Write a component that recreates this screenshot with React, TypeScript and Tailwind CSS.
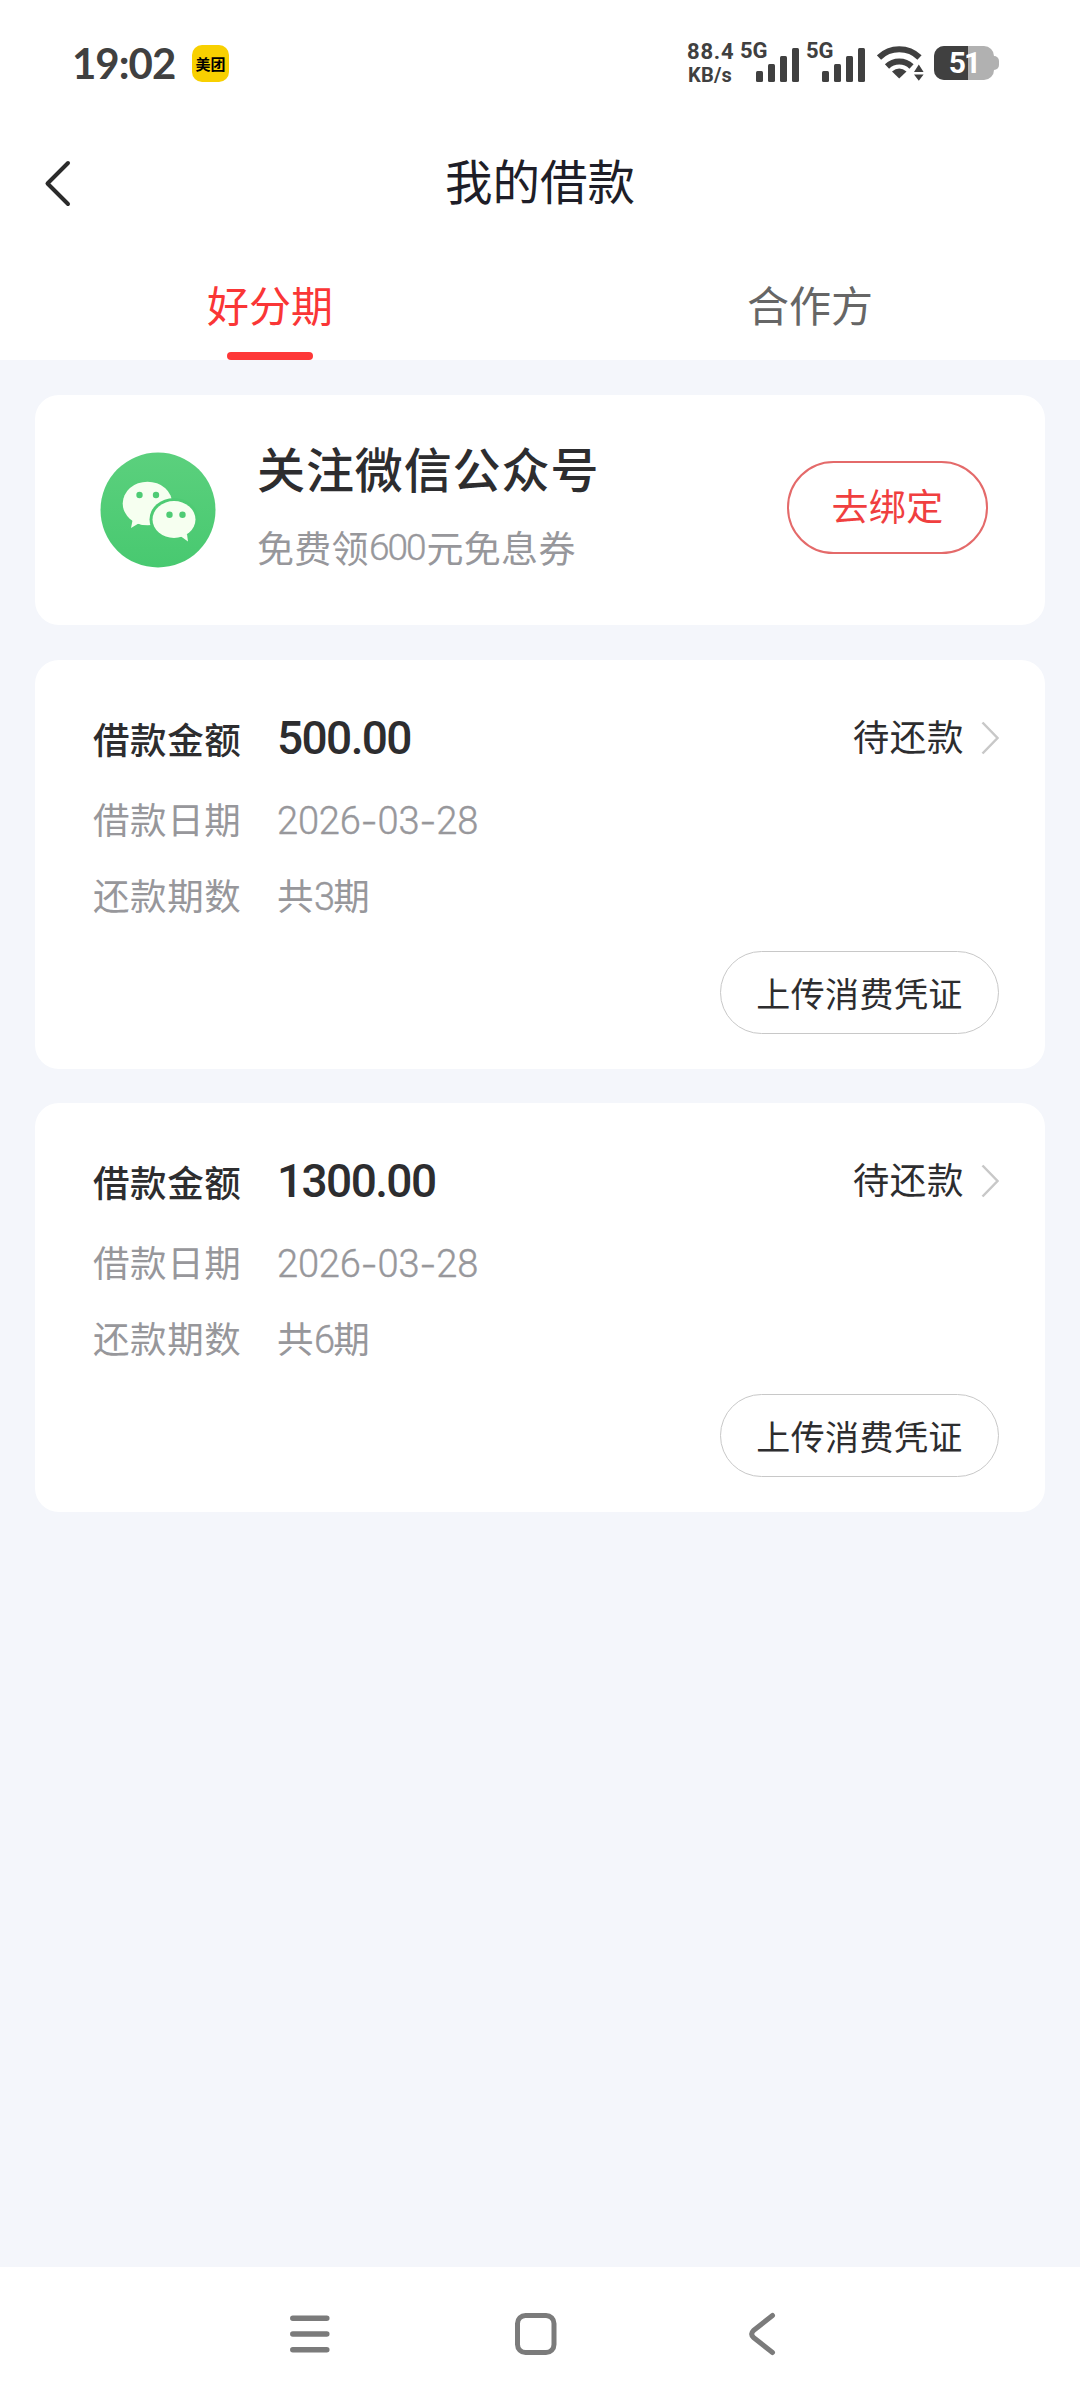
import React from 'react';

interface Loan {
  id: number;
  amount: string;
  date: string;
  periods: number;
  status: string;
}

const loans: Loan[] = [
  { id: 1, amount: '500.00', date: '2026-03-28', periods: 3, status: '待还款' },
  { id: 2, amount: '1300.00', date: '2026-03-28', periods: 6, status: '待还款' },
];

function SignalBars() {
  return (
    <svg width="43" height="34" viewBox="0 0 43 34" fill="#404040">
      <rect x="0" y="23" width="7" height="11" rx="1.5" />
      <rect x="12" y="16" width="7" height="18" rx="1.5" />
      <rect x="24" y="8" width="7" height="26" rx="1.5" />
      <rect x="36" y="0" width="7" height="34" rx="1.5" />
    </svg>
  );
}

function Signal() {
  return (
    <div className="flex h-[38px] w-[66px] shrink-0 items-end">
      <span className="-ml-px w-[16px] self-start text-[22px] font-bold leading-[14px]">5G</span>
      <SignalBars />
    </div>
  );
}

function WifiIcon() {
  return (
    <svg width="47" height="36" viewBox="0 0 47 36" className="shrink-0">
      <g fill="none" stroke="#404040" strokeWidth="6">
        <path d="M2 12.5 A29 29 0 0 1 42.500 12.500" />
        <path d="M10 21.500 A17.500 17.500 0 0 1 34.500 21.500" />
      </g>
      <path d="M15 26.500 Q22.200 20.500 29.500 26.500 L22.200 33.500 Z" fill="#404040" />
      <path d="M37 27 L41.800 19.500 L46.600 27 Z M37 29.500 L46.600 29.500 L41.800 35.800 Z" fill="#404040" />
    </svg>
  );
}

function Battery() {
  return (
    <div className="flex shrink-0 items-center">
      <div className="relative flex h-[34px] w-[60px] items-center overflow-hidden rounded-[10px] bg-[#b1b1b1]">
        <div className="h-full w-[34px] bg-[#404040]" />
        <span className="absolute inset-0 flex items-center justify-center text-[30px] font-bold leading-none tracking-[-2px] text-white">
          51
        </span>
      </div>
      <div className="h-[14px] w-[5px] rounded-r-[5px] bg-[#b1b1b1]" />
    </div>
  );
}

function StatusBar() {
  return (
    <div className="flex h-[126px] items-center pl-[72px] pr-[81px] font-['Lato','Noto_Sans_CJK_SC',sans-serif] text-[#404040]">
      <span className="w-[120px] text-[42px] font-bold leading-none tracking-[-1px]">19:02</span>
      <div className="flex h-[37px] w-[37px] items-center justify-center rounded-[10px] bg-[#f8d000]">
        <span className="font-['Noto_Sans_CJK_SC',sans-serif] text-[15px] font-bold leading-[19px] text-black">美团</span>
      </div>
      <div className="ml-auto flex items-center">
        <div className="flex w-[54px] flex-col gap-[9px] font-['Roboto',sans-serif] font-bold">
          <span className="text-[22px] leading-[14px] tracking-[0.8px]">88.4</span>
          <span className="pl-px text-[20px] leading-[14px] tracking-[0.2px]">KB/s</span>
        </div>
        <div className="flex font-['Roboto',sans-serif]">
          <Signal />
          <Signal />
        </div>
        <div className="ml-[4px] flex items-center gap-[10px] font-['Roboto',sans-serif]">
          <WifiIcon />
          <Battery />
        </div>
      </div>
    </div>
  );
}

function NavHeader() {
  return (
    <div className="flex h-[114px] items-center justify-between px-[43px]">
      <svg width="30" height="50" viewBox="0 0 30 50" fill="none" stroke="#2b2b2b" strokeWidth="4" strokeLinecap="round" strokeLinejoin="round">
        <path d="M25 5 L4.500 25.500 L25 46" />
      </svg>
      <h1 className="pb-[6px] text-[47.500px] leading-none text-[#1e1e28]">我的借款</h1>
      <div className="w-[30px]" />
    </div>
  );
}

function Tabs() {
  return (
    <div className="flex h-[120px] text-[42px] leading-none">
      <div className="flex w-1/2 flex-col items-center justify-between pt-[43px] text-[#fa3636]">
        <span>好分期</span>
        <div className="h-[8px] w-[86px] rounded-full bg-[#fe3838]" />
      </div>
      <div className="flex w-1/2 flex-col items-center pt-[43px] text-[#666666]">
        <span>合作方</span>
      </div>
    </div>
  );
}

function WechatLogo() {
  return (
    <svg width="116" height="116" viewBox="0 0 116 116" className="shrink-0">
      <defs>
        <linearGradient id="wechat" x1="0" y1="0" x2="0" y2="1">
          <stop offset="0" stopColor="#5bd07d" />
          <stop offset="1" stopColor="#48c970" />
        </linearGradient>
      </defs>
      <circle cx="58" cy="58" r="57.500" fill="url(#wechat)" />
      <path d="M33 66 L31 76 L38.500 71.500 C42 73 46 73.300 50 73 L50 60 Z" fill="#f6fff0" />
      <ellipse cx="47.500" cy="51.500" rx="24.800" ry="21.800" fill="#f6fff0" />
      <ellipse cx="74" cy="67.500" rx="24.500" ry="21.500" fill="#4ecb74" />
      <ellipse cx="74" cy="67.500" rx="21.500" ry="18.500" fill="#f6fff0" />
      <path d="M78 85 L81 84.500 L88 89.500 L87 82 Z" fill="#f6fff0" />
      <g fill="#4ecb74">
        <circle cx="39.500" cy="43" r="3.200" />
        <circle cx="56" cy="43" r="3.200" />
        <circle cx="69.500" cy="62.800" r="3.200" />
        <circle cx="82.500" cy="62.800" r="3.200" />
      </g>
    </svg>
  );
}

function FollowCard() {
  return (
    <div className="mb-px flex h-[230px] items-center rounded-[24px] bg-white pl-[65px] pr-[57px]">
      <WechatLogo />
      <div className="ml-[41px] flex flex-col gap-[38px] pb-[12px]">
        <span className="text-[48px] font-medium leading-[48px] tracking-[0.9px] text-[#2d2d2f]">关注微信公众号</span>
        <span className="flex text-[37px] leading-[37px] tracking-[0.3px] text-[#97979b]">
          免费领
          <span className="font-['Roboto',sans-serif] font-light tracking-[-2px] [-webkit-text-stroke:0.4px_#97979b]">600</span>
          <span className="pl-[2px]">元免息券</span>
        </span>
      </div>
      <button className="mb-[6px] ml-auto h-[93px] w-[201px] rounded-full border-2 border-[#e46a6a] pb-[3px] text-[37px] leading-none tracking-[0.4px] text-[#f03f3f]">
        去绑定
      </button>
    </div>
  );
}

function LoanCard({ loan }: { loan: Loan }) {
  const [year, month, day] = loan.date.split('-');

  return (
    <div className="flex h-[409px] flex-col rounded-[24px] bg-white pl-[58px] pr-[46px] pt-[58px] text-[36.500px] leading-[38px] tracking-[0.600px]">
      {/* Amount and status */}
      <div className="flex h-[40px] items-center">
        <span className="w-[184px] pt-[2px] font-medium text-[#2d2d2f]">借款金额</span>
        <span className="font-['Roboto',sans-serif] text-[46px] font-medium tracking-[-1.600px] text-[#2d2d2f]">{loan.amount}</span>
        <span className="ml-auto pb-[4px] text-[#2d2d2f]">{loan.status}</span>
        <svg width="18" height="34" viewBox="0 0 18 34" fill="none" stroke="#c8c8c8" strokeWidth="2.500" className="ml-[17px]">
          <path d="M1.500 1.500 L16.500 17 L1.500 32.500" />
        </svg>
      </div>

      {/* Details */}
      <div className="mt-[42px] flex h-[38px] items-center text-[#97979b]">
        <span className="w-[184px]">借款日期</span>
        <span className="flex pt-[3px] font-['Roboto',sans-serif] text-[38px] font-light tracking-[-0.200px] [-webkit-text-stroke:0.4px_#97979b]">
          {year}
          <span className="w-[17px] text-center font-['Inter',sans-serif]">-</span>
          {month}
          <span className="w-[17px] text-center font-['Inter',sans-serif]">-</span>
          {day}
        </span>
      </div>
      <div className="mt-[38px] flex h-[38px] items-center text-[#97979b]">
        <span className="w-[184px]">还款期数</span>
        <span>共</span>
        <span className="pt-[3px] font-['Roboto',sans-serif] text-[38px] font-light tracking-[-2px] [-webkit-text-stroke:0.4px_#97979b]">
          {loan.periods}
        </span>
        <span>期</span>
      </div>

      <button className="ml-auto mt-[37px] h-[83px] w-[279px] rounded-full border border-[#c8c8c8] text-[34px] leading-none tracking-[0.4px] text-[#2d2d2f]">
        上传消费凭证
      </button>
    </div>
  );
}

function SystemNav() {
  return (
    <div className="flex h-[133px] items-center bg-white pl-[289px]">
      <svg width="488" height="44" viewBox="0 0 488 44" fill="none" stroke="#7b7b7b" strokeWidth="5.500" strokeLinecap="round" strokeLinejoin="round">
        <path d="M3.800 6.200 H37.800 M3.800 22 H37.800 M3.800 37.700 H37.800" />
        <rect x="228.500" y="3.500" width="36.500" height="37" rx="8" strokeWidth="5" />
        <path d="M483.500 3.500 L464.500 18.500 Q461 22 464.500 25.500 L483.500 40.500" strokeWidth="5" />
      </svg>
    </div>
  );
}

export default function App() {
  return (
    <div className="flex h-[2400px] w-[1080px] flex-col bg-[#f4f6fb] font-['Noto_Sans_CJK_SC',sans-serif]">
      <div className="bg-white">
        <StatusBar />
        <NavHeader />
        <Tabs />
      </div>

      <div className="flex flex-1 flex-col gap-[34px] px-[35px] pt-[35px]">
        <FollowCard />
        {loans.map((loan) => (
          <LoanCard key={loan.id} loan={loan} />
        ))}
      </div>

      <SystemNav />
    </div>
  );
}
